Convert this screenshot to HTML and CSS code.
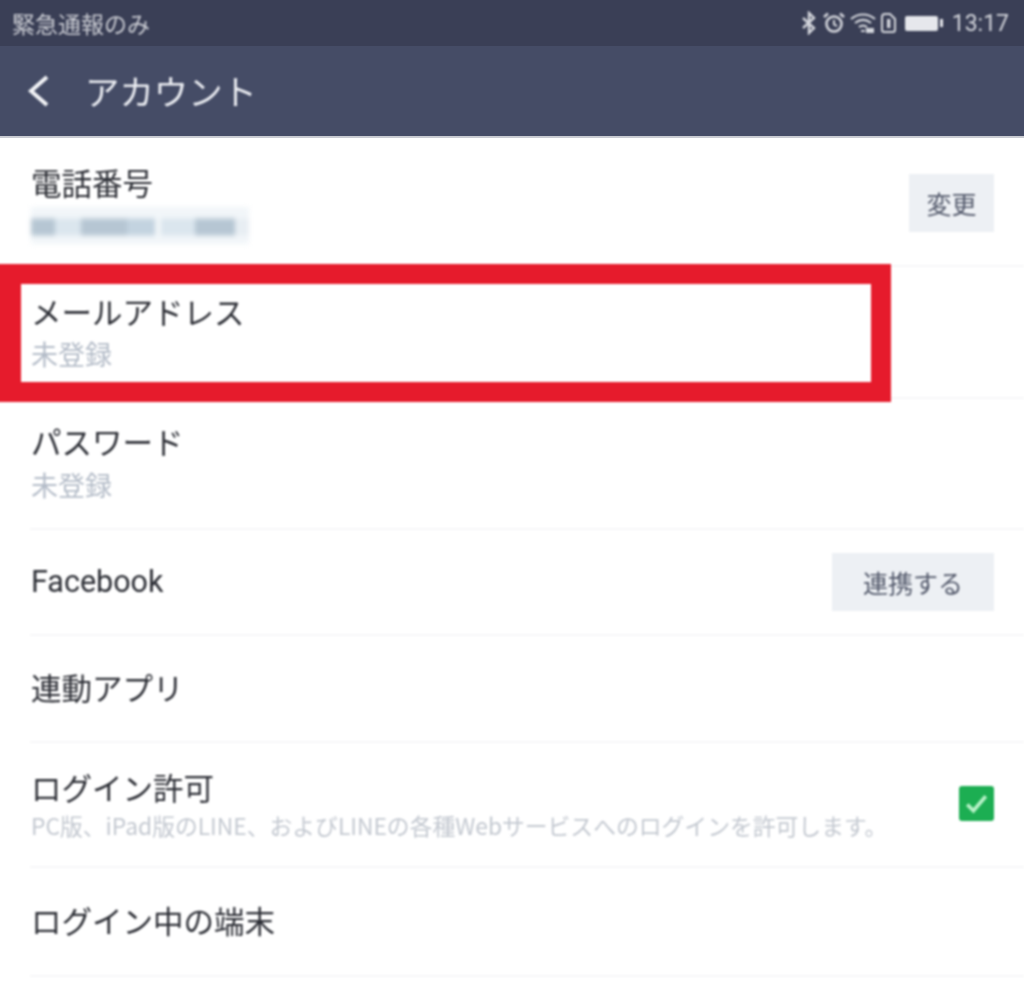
FILE: index.html
```html
<!DOCTYPE html>
<html lang="ja">
<head>
  <meta charset="utf-8">
  <title>アカウント</title>
  <link rel="stylesheet" href="styles.css">
</head>
<body>
  <div class="page">
    <div class="statusbar">
      <span class="carrier">緊急通報のみ</span>
      <div class="status-right">
        <svg class="st-icon" width="18" height="24" viewBox="0 0 18 24"><path d="M3 7l11 10-5 5V2l5 5L3 17" fill="none" stroke="#d4d6dc" stroke-width="2.4"/></svg>
        <svg class="st-icon" width="24" height="24" viewBox="0 0 24 24"><circle cx="12" cy="13" r="7.5" fill="none" stroke="#d4d6dc" stroke-width="2.6"/><path d="M12 9v4.5l3 1.5" fill="none" stroke="#d4d6dc" stroke-width="2"/><path d="M2 6l4-3.5M22 6l-4-3.5" stroke="#d4d6dc" stroke-width="2.6"/></svg>
        <svg class="st-icon" width="26" height="24" viewBox="0 0 26 24"><path d="M1 8c7-6 17-6 24 0M5 12c5-4 11-4 16 0M9 16c3-2 5-2 8 0" fill="none" stroke="#d4d6dc" stroke-width="2.2"/><path d="M11 19h4v2h-4z M16 17h8v5h-8z" fill="#d4d6dc"/></svg>
        <svg class="st-icon" width="17" height="24" viewBox="0 0 17 24"><path d="M2 6a3 3 0 0 1 3-3h5l5 5v11a2 2 0 0 1-2 2H4a2 2 0 0 1-2-2z" fill="none" stroke="#d4d6dc" stroke-width="2"/><rect x="7" y="8" width="3.4" height="9" fill="#d4d6dc"/></svg>
        <div class="battery"><span class="battery-body"></span><span class="battery-tip"></span></div>
        <span class="clock">13:17</span>
      </div>
    </div>
    <div class="appbar">
      <svg class="back" width="26" height="34" viewBox="0 0 26 34"><path d="M21 3L5 17l16 14" fill="none" stroke="#f4f5f8" stroke-width="4"/></svg>
      <span class="appbar-title">アカウント</span>
    </div>

    <div class="list">
      <div class="row row-phone">
        <div class="row-text">
          <div class="label">電話番号</div>
          <div class="mosaic">
            <i class="m3 w24"></i><i class="m1 w26"></i><i class="m3 w46"></i><i class="m2 w28"></i><i class="m0 w6"></i><i class="m1 w34"></i><i class="m3 w40"></i><i class="m4 w14"></i>
          </div>
        </div>
        <div class="btn btn-small">変更</div>
      </div>
      <div class="row row-mail">
        <div class="row-text">
          <div class="label">メールアドレス</div>
          <div class="sub">未登録</div>
        </div>
      </div>
      <div class="row row-pass">
        <div class="row-text">
          <div class="label">パスワード</div>
          <div class="sub">未登録</div>
        </div>
      </div>
      <div class="row row-fb">
        <div class="label">Facebook</div>
        <div class="btn btn-wide">連携する</div>
      </div>
      <div class="row row-apps">
        <div class="label">連動アプリ</div>
      </div>
      <div class="row row-login">
        <div class="row-text">
          <div class="label">ログイン許可</div>
          <div class="desc">PC版、iPad版のLINE、およびLINEの各種Webサービスへのログインを許可します。</div>
        </div>
        <div class="check">
          <svg width="35" height="35" viewBox="0 0 34 34"><path d="M8 18l6 6L26 10" fill="none" stroke="#b8f2c8" stroke-width="3.6"/></svg>
        </div>
      </div>
      <div class="row row-device">
        <div class="label">ログイン中の端末</div>
      </div>
    </div>

    <div class="redbox"></div>
  </div>
</body>
</html>
```

FILE: styles.css
```css
* {
  box-sizing: border-box;
}
html, body {
  margin: 0;
  background: #fff;
}
.page {
  position: relative;
  width: 1024px;
  height: 1003px;
  overflow: hidden;
  font-family: "Noto Sans CJK JP", "Noto Sans", sans-serif;
}

/* the reference is a soft upscaled photo */
.carrier, .status-right, .back, .appbar-title, .row, .redbox {
  filter: blur(0.8px);
}

.statusbar {
  height: 46px;
  background: #3a3f56;
  display: flex;
  align-items: center;
  justify-content: space-between;
  padding: 0 15px 0 12px;
  color: #c9cbd2;
  font-size: 23px;
}
.carrier {
  line-height: 46px;
}
.status-right {
  display: flex;
  align-items: center;
}
.st-icon {
  margin-right: 4px;
}
.battery {
  display: flex;
  align-items: center;
  margin: 0 9px 0 4px;
}
.battery-body {
  width: 33px;
  height: 15px;
  background: #e6e7ec;
  border-radius: 2px;
}
.battery-tip {
  width: 3px;
  height: 8px;
  margin-left: 2px;
  background: #e6e7ec;
}
.clock {
  font-family: "Roboto", sans-serif;
  font-size: 23px;
  color: #d4d6dc;
}

.appbar {
  height: 92px;
  background: #454c66;
  display: flex;
  align-items: center;
  padding-left: 26px;
  border-bottom: 2px solid #c9cbd2;
}
.back {
  margin-right: 33px;
}
.appbar-title {
  color: #eceef3;
  font-size: 34.4px;
  margin-top: -3px;
}

.row {
  display: flex;
  align-items: center;
  justify-content: space-between;
  margin-left: 30px;
  padding: 0 30px 0 1px;
  border-bottom: 2px solid #f7f7f8;
}
.row-phone { height: 129px; }
.row-mail { height: 132px; }
.row-pass { height: 131px; padding-bottom: 2px; }
.row-fb { height: 106px; }
.row-apps { height: 107px; padding-bottom: 4px; }
.row-login { height: 125px; padding-bottom: 2px; }
.row-device { height: 109px; padding-bottom: 4px; }
.row-phone .row-text { padding-top: 3px; }

.label {
  font-size: 30.5px;
  line-height: 40px;
  color: #2c2e35;
}
.row-fb .label {
  font-family: "Roboto", sans-serif;
  font-size: 30.5px;
}
.sub {
  font-size: 27px;
  line-height: 40px;
  color: #b4bcc8;
  margin-top: 3px;
}
.row-pass .sub {
  margin-top: 4px;
}
.desc {
  font-size: 22.8px;
  line-height: 30px;
  color: #c3c8d0;
  white-space: nowrap;
  margin-top: 4px;
}

.mosaic {
  display: flex;
  height: 38px;
  margin-top: 5px;
  filter: blur(2px);
}
.mosaic i {
  height: 100%;
  background: linear-gradient(#f2f6f9 0 25%, var(--c) 35% 70%, #f2f6f9 80% 95%, #fff);
}
.w6 { width: 6px; }
.w14 { width: 14px; }
.w24 { width: 24px; }
.w26 { width: 26px; }
.w28 { width: 28px; }
.w34 { width: 34px; }
.w40 { width: 40px; }
.w46 { width: 46px; }
.m0 { --c: #f2f6f9; }
.m1 { --c: #dbe6ee; }
.m2 { --c: #c3d3e0; }
.m3 { --c: #b6c6d3; }
.m4 { --c: #e8eef3; }

.btn {
  height: 58px;
  background: #edf0f4;
  color: #52586a;
  font-size: 25px;
  display: flex;
  align-items: center;
  justify-content: center;
}
.btn-small {
  width: 85px;
  margin-top: 3px;
}
.btn-wide { width: 162px; }

.check {
  width: 35px;
  height: 35px;
  background: #1cae52;
  border-radius: 3px;
}
.check svg {
  display: block;
}

.redbox {
  position: absolute;
  left: -4px;
  top: 264px;
  width: 895px;
  height: 138px;
  border: 20px solid #e61b2c;
  border-left-width: 25px;
}
```
